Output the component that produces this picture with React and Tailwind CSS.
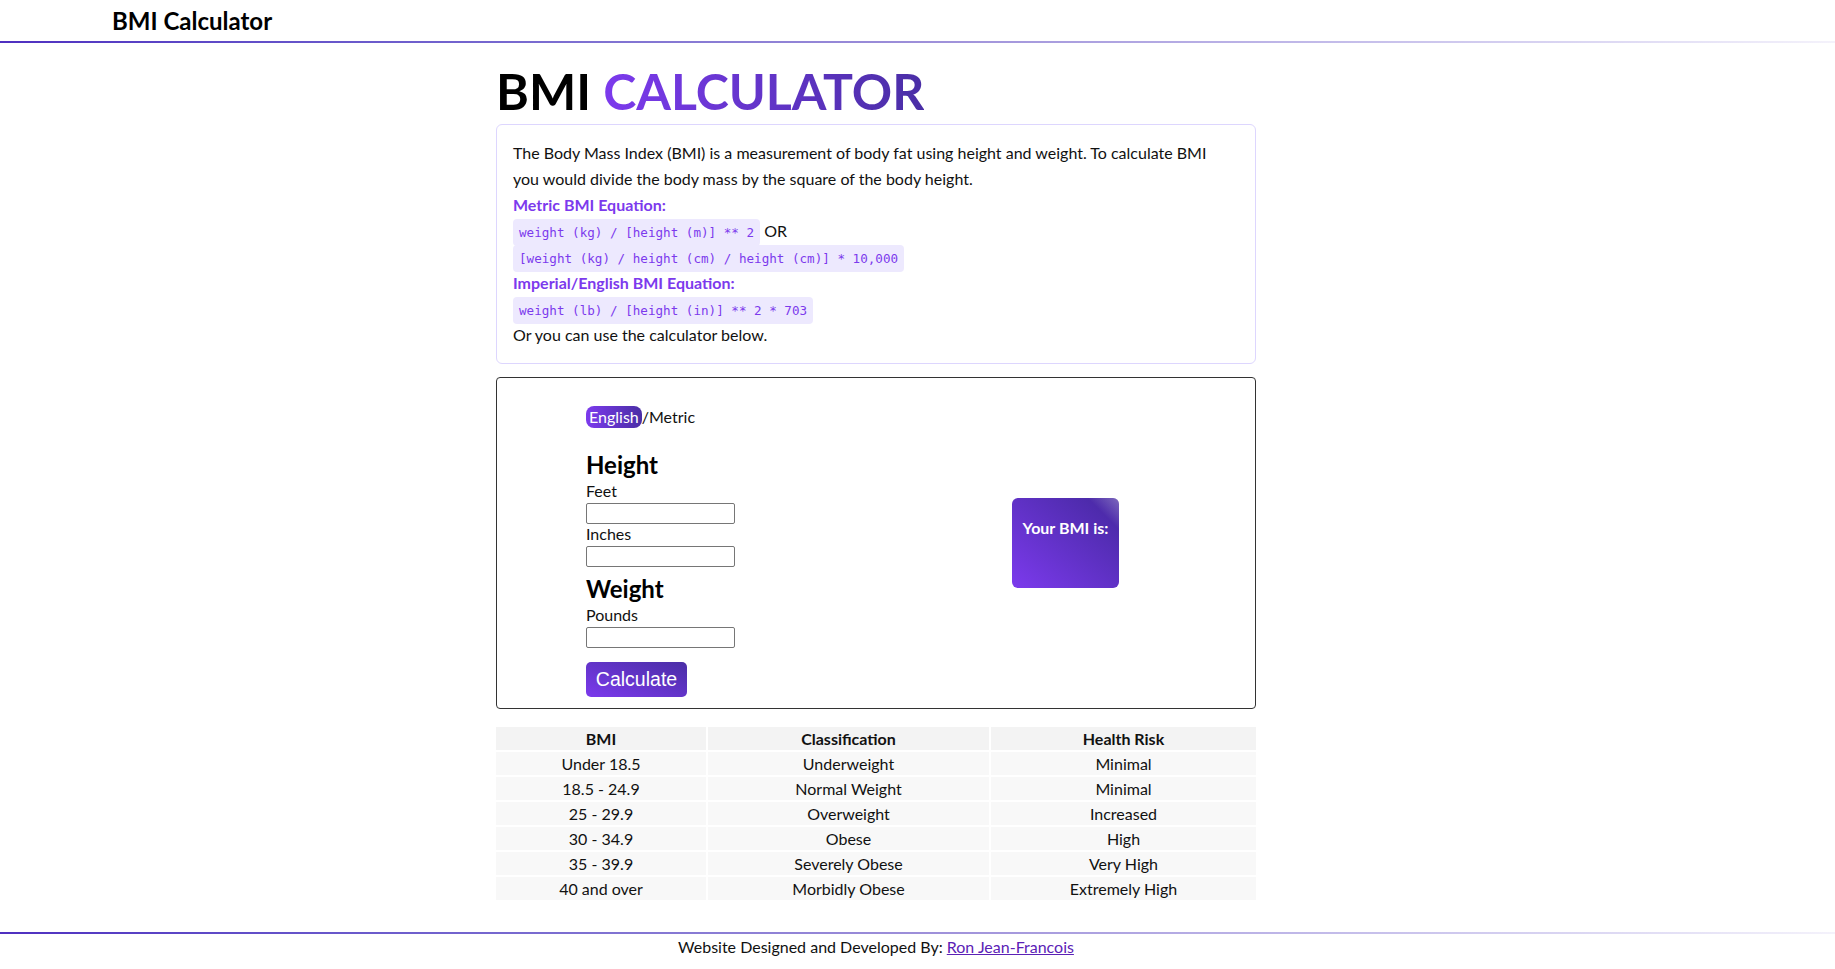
import React from 'react';

const rows = [
  ['Under 18.5', 'Underweight', 'Minimal'],
  ['18.5 - 24.9', 'Normal Weight', 'Minimal'],
  ['25 - 29.9', 'Overweight', 'Increased'],
  ['30 - 34.9', 'Obese', 'High'],
  ['35 - 39.9', 'Severely Obese', 'Very High'],
  ['40 and over', 'Morbidly Obese', 'Extremely High'],
];

function Code({ children }) {
  return (
    <code className="rounded-[4px] bg-[#ede9fe] px-[6px] py-[6px] font-['DejaVu_Sans_Mono',monospace] text-[12.6px] leading-none text-[#7c3aed]">
      {children}
    </code>
  );
}

function Field({ label }) {
  return (
    <>
      <label className="text-[16px] leading-[20px]">{label}</label>
      <input type="text" className="mt-[2px] h-[21px] w-[149px] rounded-[2px] border border-[#767676] bg-white" />
    </>
  );
}

export default function App() {
  return (
    <div className="min-h-[969px] bg-white font-['Lato',sans-serif] text-[16px] text-[#111]">
      <header className="h-[41px] pl-[112px] pt-[5px]">
        <h1 className="text-[24px] font-bold leading-[32px] text-black">BMI Calculator</h1>
      </header>
      <div className="h-[2px] bg-gradient-to-r from-[#4f2fc0] via-[#9d8fd9] to-[#f4f2fb]" />

      <main className="w-[1752px]">
        <div className="mx-auto w-[760px]">
          <h2 className="mt-[18px] text-[50px] font-bold leading-[60px] text-black">
            BMI{' '}
            <span className="bg-gradient-to-r from-[#7c3aed] to-[#4a2ea6] bg-clip-text text-transparent">CALCULATOR</span>
          </h2>

          <div className="mt-[3px] rounded-[6px] border border-[#ddd6fe] px-4 py-[15px] leading-[26px]">
            <p>
              The Body Mass Index (BMI) is a measurement of body fat using height and weight. To calculate BMI
              <br />
              you would divide the body mass by the square of the body height.
            </p>
            <p className="font-bold text-[#7c3aed]">Metric BMI Equation:</p>
            <p className="h-[26px]">
              <Code>weight (kg) / [height (m)] ** 2</Code> OR
            </p>
            <p className="h-[26px]">
              <Code>[weight (kg) / height (cm) / height (cm)] * 10,000</Code>
            </p>
            <p className="font-bold text-[#7c3aed]">Imperial/English BMI Equation:</p>
            <p className="h-[26px]">
              <Code>weight (lb) / [height (in)] ** 2 * 703</Code>
            </p>
            <p>Or you can use the calculator below.</p>
          </div>

          <div className="mt-[13px] grid h-[332px] grid-cols-2 rounded-[4px] border border-[#333]">
            <div className="flex flex-col items-start pl-[89px] pt-[28px]">
              <div className="flex items-center leading-[22px]">
                <span className="rounded-[8px] bg-gradient-to-r from-[#7c3aed] to-[#4a2ea6] px-[3px] text-white">English</span>
                <span>/Metric</span>
              </div>
              <h3 className="mt-[21px] text-[24px] font-bold leading-[32px] text-black">Height</h3>
              <Field label="Feet" />
              <Field label="Inches" />
              <h3 className="mt-[6px] text-[24px] font-bold leading-[32px] text-black">Weight</h3>
              <Field label="Pounds" />
              <button className="mt-[14px] h-[35px] w-[101px] rounded-[5px] bg-gradient-to-tr from-[#7c3aed] to-[#4a2ea6] font-['Liberation_Sans',sans-serif] text-[19.5px] text-white">
                Calculate
              </button>
            </div>
            <div className="flex items-center justify-center">
              <div className="relative h-[90px] w-[107px] overflow-hidden rounded-[6px] bg-gradient-to-tr from-[#7c3aed] to-[#4528a0] pt-[18px] text-center font-bold text-white">
                <div className="absolute inset-0 bg-[linear-gradient(225deg,rgba(255,255,255,0.3)_0%,rgba(255,255,255,0)_16%)]" />
                <span className="relative">Your BMI is:</span>
              </div>
            </div>
          </div>

          <table className="mt-[16px] w-[764px] -ml-[2px] border-separate border-spacing-[2px] text-center leading-[21px]">
            <thead>
              <tr className="bg-[#f3f3f3]">
                <th className="w-[210px] py-[1px] font-bold">BMI</th>
                <th className="w-[281px] py-[1px] font-bold">Classification</th>
                <th className="py-[1px] font-bold">Health Risk</th>
              </tr>
            </thead>
            <tbody>
              {rows.map(r => (
                <tr key={r[0]} className="bg-[#f8f8f8]">
                  {r.map(c => (
                    <td key={c} className="py-[1px]">{c}</td>
                  ))}
                </tr>
              ))}
            </tbody>
          </table>
        </div>

        <div className="mt-[30px] h-[2px] w-[1835px] bg-gradient-to-r from-[#4f2fc0] via-[#9d8fd9] to-[#f4f2fb]" />
        <p className="pt-[2px] text-center leading-[22px]">
          Website Designed and Developed By:{' '}
          <a href="#" className="text-[#5b21b6] underline">Ron Jean-Francois</a>
        </p>
      </main>
    </div>
  );
}
